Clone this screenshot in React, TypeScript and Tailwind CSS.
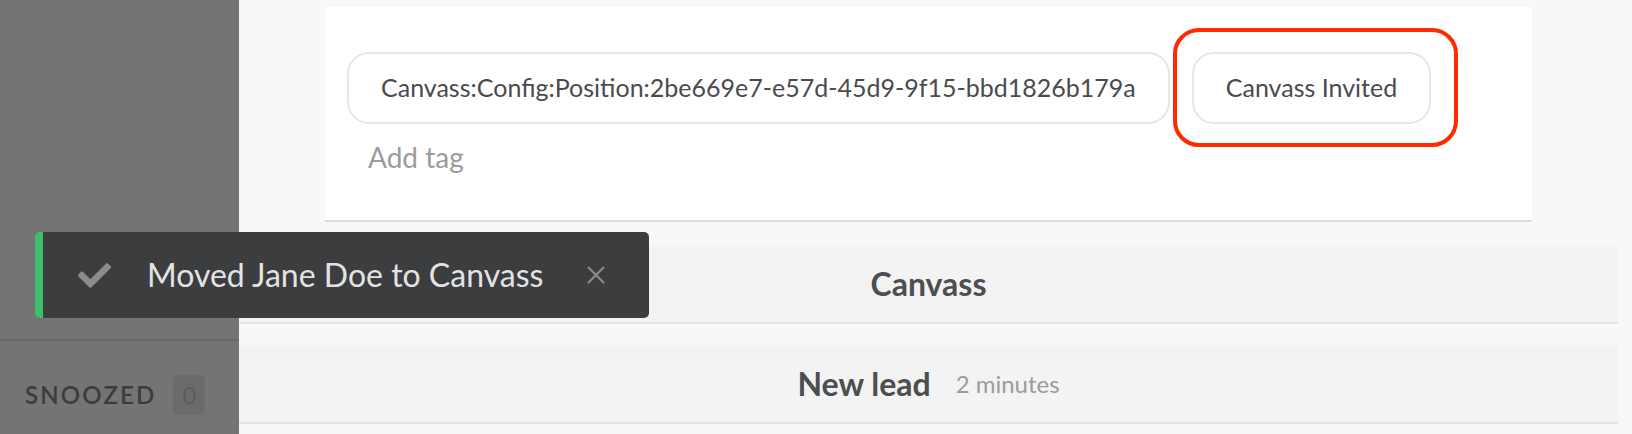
import { FaCheck } from "react-icons/fa";

const font = { fontFamily: "Lato, 'Open Sans', sans-serif" };

const Sidebar = () => {
  return (
    <div className="w-[239px] shrink-0 h-full bg-[#737473] flex flex-col">
      <div className="h-[341px] border-b-2 border-[#686968]" />
      <div className="flex items-center pl-[25px] pt-[34px]">
        <span className="text-[24px] font-semibold tracking-[0.09em] text-[#3b3c3c] leading-none">
          SNOOZED
        </span>
        <span className="ml-[17px] w-[32px] h-[40px] rounded-[5px] bg-[#6a6b6a] text-[#5b5c5c] text-[24px] flex items-center justify-center">
          0
        </span>
      </div>
    </div>
  );
};

const TagCard = () => {
  return (
    <div className="ml-[86px] w-[1207px] h-[215px] bg-white border-b-2 border-[#dcdcdc] pt-[45px] pl-[22px]">
      <div className="flex items-center gap-[22px]">
        <div className="h-[72px] px-[32px] rounded-[22px] border-2 border-[#e6e6e6] flex items-center text-[25px] text-[#4a4b4d]">
          Canvass:Config:Position:2be669e7-e57d-45d9-9f15-bbd1826b179a
        </div>
        <div className="relative">
          <div className="h-[72px] px-[32px] rounded-[22px] border-2 border-[#e6e6e6] flex items-center text-[25px] text-[#4a4b4d]">
            Canvass Invited
          </div>
          <div className="absolute left-[-19px] top-[-24px] w-[285px] h-[119px] rounded-[26px] border-4 border-[#ff2a00]" />
        </div>
      </div>
      <div className="pl-[21px] pt-[19px] text-[28px] text-[#9a9b9c] leading-none">Add tag</div>
    </div>
  );
};

const Toast = () => {
  return (
    <div className="absolute left-[35px] top-[232px] w-[614px] h-[86px] rounded-[5px] bg-[#3c3d3f] border-l-[8px] border-[#3dbf6b] flex items-center">
      <FaCheck className="ml-[35px] text-[#8b8c8d]" size={33} />
      <span className="ml-[36px] text-[32px] text-[#e3e3e3]">Moved Jane Doe to Canvass</span>
      <svg className="ml-[44px]" width="18" height="18" viewBox="0 0 18 18">
        <path d="M1 1L17 17M17 1L1 17" stroke="#8a8b8c" strokeWidth="2.2" />
      </svg>
    </div>
  );
};

const Row = ({ children }: { children: React.ReactNode }) => {
  return (
    <div className="mr-[14px] h-[79px] bg-[#f3f3f3] border-b-2 border-[#e4e4e4] flex items-center justify-center">
      {children}
    </div>
  );
};

export default function App() {
  return (
    <div className="relative w-[1632px] h-[434px] overflow-hidden flex bg-[#f8f8f8]" style={font}>
      <Sidebar />
      <div className="flex-1 flex flex-col pt-[7px]">
        <TagCard />
        <div className="mt-[23px] flex flex-col gap-[21px]">
          <Row>
            <span className="text-[32px] font-bold text-[#4d4e50]">Canvass</span>
          </Row>
          <Row>
            <span className="text-[32px] font-bold text-[#4d4e50]">New lead</span>
            <span className="ml-[25px] text-[24px] text-[#9b9c9d]">2 minutes</span>
          </Row>
        </div>
      </div>
      <Toast />
    </div>
  );
}
